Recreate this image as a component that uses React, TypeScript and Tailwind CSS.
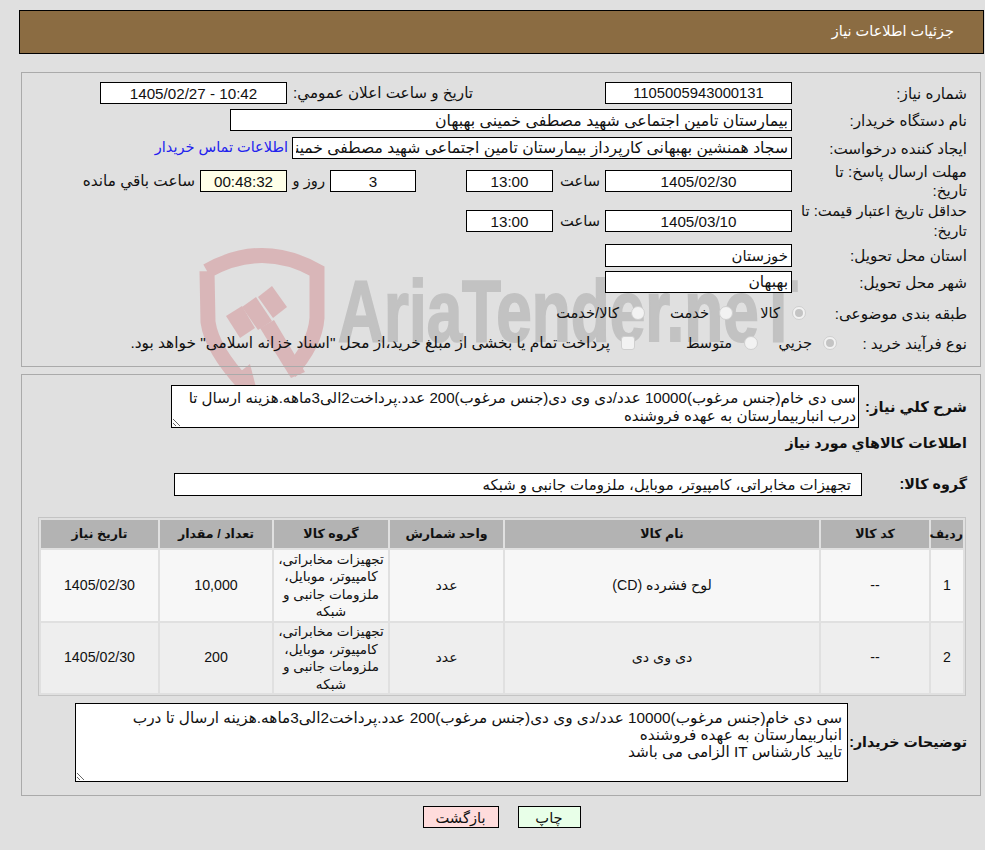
const inputBase = "h-full border border-black bg-white px-[3px] text-[#111] outline-none";

const buyerText =
  "سی دی خام(جنس مرغوب)10000 عدد/دی وی دی(جنس مرغوب)200 عدد.پرداخت2الی3ماهه.هزینه ارسال تا درب انباربیمارستان به عهده فروشنده";

const groupName = "تجهیزات مخابراتی، کامپیوتر، موبایل، ملزومات جانبی و شبکه";

function Field({
  value,
  className,
  center,
}: {
  value: string;
  className: string;
  center?: boolean;
}) {
  return (
    <input
      readOnly
      value={value}
      className={`${inputBase} ${center ? "text-center" : "text-right"} ${className}`}
    />
  );
}

function Label({ children }: { children: React.ReactNode }) {
  return <div className="w-[170px] shrink-0 text-[15.2px] leading-[19px]">{children}</div>;
}

function Radio({ checked }: { checked?: boolean }) {
  return (
    <span className="flex h-[14px] w-[14px] shrink-0 items-center justify-center rounded-full border border-[#cfcfcf] bg-[#f2f2f2]">
      {checked && <span className="h-[8px] w-[8px] rounded-full bg-[#c4c4c4]" />}
    </span>
  );
}

function Watermark() {
  return (
    <div className="pointer-events-none absolute left-0 top-0 h-[420px] w-[985px]" dir="ltr">
      <svg className="absolute left-0 top-0" width="985" height="420" viewBox="0 0 985 420">
        <path
          d="M207 271 Q262 240 317 271 L317 318 Q315 345 290 372 M207 271 L208 322 Q212 350 245 385"
          fill="none"
          stroke="#d9b6b8"
          strokeWidth="15"
        />
        <path d="M226 316 L242 306 L255 328 L240 338 Z" fill="#d9b6b8" />
        <path d="M242 307 L256 297 L272 321 L258 330 Z" fill="#d9b6b8" />
        <path d="M258 297 L272 286 L287 307 L273 318 Z" fill="#d9b6b8" />
        <path d="M260 328 L274 320 L305 372 L291 378 Z" fill="#d9b6b8" />
        <path d="M232 378 L250 364 L258 395 Z" fill="#d9b6b8" />
      </svg>
      <div className="absolute left-[338px] top-[261px] origin-left scale-x-[0.725] whitespace-nowrap font-['Liberation_Sans',sans-serif] text-[88px] font-bold leading-[100px] text-[#c2c2c2] [-webkit-text-stroke:2px_#c2c2c2]">
        AriaTender.neT
      </div>
    </div>
  );
}

function Th({ children }: { children: React.ReactNode }) {
  return <th className="bg-[#b3b3b3] p-0 text-[12.6px] font-bold">{children}</th>;
}

function Row({
  idx,
  code,
  name,
  qty,
  bg,
  height,
}: {
  idx: string;
  code: string;
  name: string;
  qty: string;
  bg: string;
  height: string;
}) {
  const td = `${bg} p-0 text-center align-middle`;
  return (
    <tr className={height}>
      <td className={td}>{idx}</td>
      <td className={td}>{code}</td>
      <td className={td}>{name}</td>
      <td className={td}>عدد</td>
      <td className={`${td} text-[13.6px] leading-[17.5px]`}>{groupName}</td>
      <td className={td}>{qty}</td>
      <td className={td}>1405/02/30</td>
    </tr>
  );
}

export default function App() {
  return (
    <div
      dir="rtl"
      className="relative h-[850px] w-[985px] overflow-hidden bg-[#e0e0e0] pt-[10px] font-['Liberation_Sans','DejaVu_Sans',sans-serif] text-[14.67px] text-[#111]"
    >
      <Watermark />

      <div className="relative ml-[19px] mr-px flex h-[44px] items-center border border-black bg-[#8b6c42] pr-[29px] text-[14.5px] text-white">
        جزئیات اطلاعات نیاز
      </div>

      <div className="relative ml-[21px] mr-[4px] mt-[18px] flex h-[295px] flex-col border border-[#aaa] pr-[13px] pt-[9px]">
        <div className="flex h-[22px] items-center">
          <Label>شماره نیاز:</Label>
          <Field center value="1105005943000131" className="mr-[5px] w-[187px] text-[14.8px]" />
          <div className="mr-[132px] w-[181px] text-[15.2px]">تاریخ و ساعت اعلان عمومي:</div>
          <Field center value="10:42 - 1405/02/27" className="mr-[5px] w-[187px] text-[15.2px]" />
        </div>
        <div className="mt-[5px] flex h-[22px] items-center">
          <Label>نام دستگاه خریدار:</Label>
          <Field
            value="بیمارستان تامین اجتماعی شهید مصطفی خمینی بهبهان"
            className="mr-[5px] w-[562px] text-[15.8px]"
          />
        </div>
        <div className="mt-[6px] flex h-[22px] items-center">
          <Label>ایجاد کننده درخواست:</Label>
          <Field
            value="سجاد همنشین بهبهانی کارپرداز بیمارستان تامین اجتماعی شهید مصطفی خمینی بهبهان"
            className="mr-[5px] w-[500px] text-[15.6px]"
          />
          <a className="mr-[4px] whitespace-nowrap text-[14.5px] text-[#2222ee]">اطلاعات تماس خریدار</a>
        </div>
        <div className="mt-[11px] flex h-[22px] items-center">
          <Label>مهلت ارسال پاسخ: تا تاریخ:</Label>
          <Field center value="1405/02/30" className="mr-[5px] w-[187px] text-[15.2px]" />
          <div className="mr-[5px] w-[47px]">ساعت</div>
          <Field center value="13:00" className="w-[87px] text-[15.2px]" />
          <Field center value="3" className="mr-[50px] w-[86px] text-[15.2px]" />
          <div className="mr-[5px] w-[38px]">روز و</div>
          <Field center value="00:48:32" className="w-[87px] !bg-[#ffffe8] text-[15.2px]" />
          <div className="mr-[5px] whitespace-nowrap text-[15.3px]">ساعت باقي مانده</div>
        </div>
        <div className="mt-[18px] flex h-[22px] items-center">
          <Label>
            <span className="whitespace-nowrap text-[14.8px]">
              حداقل تاریخ اعتبار قیمت: تا
              <br />
              تاریخ:
            </span>
          </Label>
          <Field center value="1405/03/10" className="mr-[5px] w-[187px] text-[15.2px]" />
          <div className="mr-[5px] w-[47px]">ساعت</div>
          <Field center value="13:00" className="w-[87px] text-[15.2px]" />
        </div>
        <div className="mt-[12px] flex h-[23px] items-center">
          <Label>استان محل تحویل:</Label>
          <Field value="خوزستان" className="mr-[5px] w-[187px] text-[14.9px]" />
        </div>
        <div className="mt-[4px] flex h-[22px] items-center">
          <Label>شهر محل تحویل:</Label>
          <Field value="بهبهان" className="mr-[5px] w-[187px] text-[15.6px]" />
        </div>
        <div className="mt-[9px] flex h-[22px] items-center">
          <Label>طبقه بندی موضوعی:</Label>
          <span className="mr-[-9px]" />
          <Radio checked />
          <span className="mr-[12px] w-[47px]">کالا</span>
          <Radio />
          <span className="mr-[10px] w-[64px]">خدمت</span>
          <Radio />
          <span className="mr-[12px] whitespace-nowrap">کالا/خدمت</span>
        </div>
        <div className="mt-[8px] flex h-[22px] items-center">
          <Label>نوع فرآیند خرید :</Label>
          <span className="mr-[-40px]" />
          <Radio checked />
          <span className="mr-[11px] w-[54px]">جزیي</span>
          <Radio />
          <span className="mr-[12px] w-[97px]">متوسط</span>
          <span className="h-[14px] w-[14px] shrink-0 rounded-[3px] border border-[#cfcfcf] bg-[#f2f2f2]" />
          <span className="mr-[11px] whitespace-nowrap text-[15.4px]">
            پرداخت تمام یا بخشی از مبلغ خرید،از محل "اسناد خزانه اسلامی" خواهد بود.
          </span>
        </div>
      </div>

      <div className="relative ml-[21px] mr-[4px] mt-[7px] h-[422px] border border-[#aaa] pr-[13px] pt-[10px]">
        <div className="flex h-[43px] items-center">
          <div className="w-[108px] shrink-0 font-bold">شرح کلي نیاز:</div>
          <textarea
            readOnly
            value={buyerText}
            className="h-[43px] w-[688px] border border-black bg-white px-[2px] pt-[3px] text-[15.1px] leading-[18px] outline-none"
          />
        </div>
        <div className="h-[30px] text-[14.3px] font-bold leading-[30px]">اطلاعات کالاهاي مورد نیاز</div>
        <div className="mt-[15px] flex h-[23px] items-center">
          <div className="w-[105px] shrink-0 text-[14.3px] font-bold">گروه کالا:</div>
          <Field value={groupName} className="w-[688px] !pr-[10px] text-[14.9px]" />
        </div>
        <div className="mr-[1px] mt-[21px]">
          <table className="w-[928px] table-fixed border-separate border-spacing-[2px] border border-[#c4c4c4] text-[14.2px]">
            <colgroup>
              <col className="w-[32px]" />
              <col className="w-[108px]" />
              <col className="w-[314px]" />
              <col className="w-[113px]" />
              <col className="w-[114px]" />
              <col className="w-[112px]" />
              <col className="w-[117px]" />
            </colgroup>
            <thead>
              <tr className="h-[28px]">
                <Th>ردیف</Th>
                <Th>کد کالا</Th>
                <Th>نام کالا</Th>
                <Th>واحد شمارش</Th>
                <Th>گروه کالا</Th>
                <Th>تعداد / مقدار</Th>
                <Th>تاریخ نیاز</Th>
              </tr>
            </thead>
            <tbody>
              <Row idx="1" code="--" name="لوح فشرده (CD)" qty="10,000" bg="bg-[#f7f7f7]" height="h-[71px]" />
              <Row idx="2" code="--" name="دی وی دی" qty="200" bg="bg-[#eeeeee]" height="h-[70px]" />
            </tbody>
          </table>
        </div>
        <div className="mt-[7px] flex items-center">
          <div className="w-[119px] shrink-0 whitespace-nowrap text-[14.2px] font-bold">توضیحات خریدار:</div>
          <textarea
            readOnly
            value={`${buyerText}\nتایید کارشناس IT الزامی می باشد`}
            className="h-[79px] w-[773px] border border-black bg-white pl-[3px] pr-[5px] pt-[5px] text-[15.3px] leading-[17px] outline-none"
          />
        </div>
      </div>

      <div className="relative mt-[10px] flex justify-center gap-[19px] pl-[18px]">
        <button className="h-[22px] w-[63px] border border-black bg-[#e8ffe8]">چاپ</button>
        <button className="h-[22px] w-[76px] border border-black bg-[#ffdcdc]">بازگشت</button>
      </div>
    </div>
  );
}
